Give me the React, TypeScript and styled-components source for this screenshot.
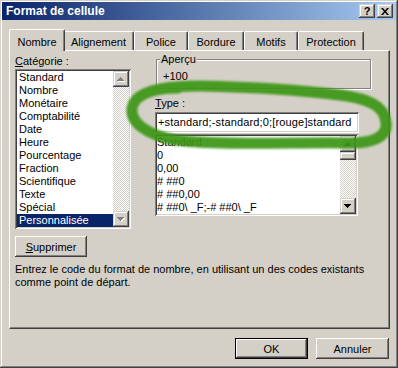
import React from 'react';
import styled, { createGlobalStyle } from 'styled-components';

const GlobalStyle = createGlobalStyle`
  html, body {
    margin: 0;
    padding: 0;
    background: #D4D0C8;
  }
  body {
    font-family: "Liberation Sans", Arial, sans-serif;
    font-size: 11px;
  }
`;

const raised = `
  box-shadow: inset -1px -1px #404040, inset 1px 1px #D4D0C8,
    inset -2px -2px #808080, inset 2px 2px #FFFFFF;
`;

const sunken = `
  box-shadow: inset 1px 1px #808080, inset -1px -1px #FFFFFF,
    inset 2px 2px #404040, inset -2px -2px #D4D0C8;
`;

const Window = styled.div`
  position: relative;
  width: 398px;
  height: 368px;
  box-sizing: border-box;
  padding: 2px;
  background: #D4D0C8;
  color: #000000;
  font: 11px "Liberation Sans", Arial, sans-serif;
  ${raised}
  display: flex;
  flex-direction: column;
`;

const TitleBar = styled.div`
  height: 18px;
  display: flex;
  align-items: center;
  justify-content: space-between;
  padding: 0 3px 0 4px;
  background: linear-gradient(to right, #0A246A, #A6CAF0);
`;

const Title = styled.span`
  color: #FFFFFF;
  font-weight: bold;
  font-size: 12px;
`;

const Caption = styled.div`
  display: flex;
  gap: 2px;
`;

const CaptionButton = styled.div`
  width: 16px;
  height: 14px;
  box-sizing: border-box;
  background: #D4D0C8;
  ${raised}
  display: flex;
  align-items: center;
  justify-content: center;
  font-weight: bold;
  font-size: 11px;
  line-height: 14px;
`;

const Body = styled.div`
  padding: 9px 6px 0 7px;
`;

const TabRow = styled.div`
  position: relative;
  z-index: 1;
  display: flex;
  align-items: flex-end;
  height: 22px;
  margin-bottom: -1px;
  padding-left: 2px;
`;

const Tab = styled.div<{ $w: number; $active?: boolean }>`
  position: relative;
  z-index: ${(p) => (p.$active ? 2 : 1)};
  box-sizing: border-box;
  width: ${(p) => (p.$active ? p.$w + 4 : p.$w)}px;
  height: ${(p) => (p.$active ? 22 : 19)}px;
  margin: 0 ${(p) => (p.$active ? -2 : 0)}px ${(p) => (p.$active ? 0 : 1)}px;
  padding-top: ${(p) => (p.$active ? 6 : 4)}px;
  line-height: 13px;
  text-align: center;
  background: #D4D0C8;
  border-top: 1px solid #FFFFFF;
  border-left: 1px solid #FFFFFF;
  border-right: 1px solid #404040;
  border-radius: 2px 2px 0 0;
  box-shadow: inset -1px 0 #808080;
`;

const Panel = styled.div`
  height: 279px;
  box-sizing: border-box;
  padding: 4px 0 0 5px;
  border-top: 1px solid #FFFFFF;
  border-left: 1px solid #FFFFFF;
  border-right: 1px solid #404040;
  border-bottom: 1px solid #404040;
  box-shadow: inset -1px -1px #808080;
`;

const Columns = styled.div`
  display: grid;
  grid-template-columns: 116px 216px;
  column-gap: 24px;
  align-items: start;
`;

const Column = styled.div`
  display: flex;
  flex-direction: column;
`;

const Label = styled.div<{ $top?: number }>`
  line-height: 13px;
  margin-top: ${(p) => p.$top ?? 0}px;
`;

const ListBox = styled.div<{ $w: number; $h: number; $top?: number }>`
  width: ${(p) => p.$w}px;
  height: ${(p) => p.$h}px;
  margin-top: ${(p) => p.$top ?? 0}px;
  box-sizing: border-box;
  padding: 2px;
  background: #FFFFFF;
  ${sunken}
  display: flex;
`;

const Items = styled.div`
  flex: 1;
  overflow: hidden;
`;

const Item = styled.div<{ $pad: number; $selected?: boolean }>`
  height: 13px;
  line-height: 13px;
  padding-left: ${(p) => p.$pad}px;
  white-space: nowrap;
  background: ${(p) => (p.$selected ? '#0A246A' : 'transparent')};
  color: ${(p) => (p.$selected ? '#FFFFFF' : '#000000')};
`;

const ScrollBar = styled.div`
  width: 16px;
  display: flex;
  flex-direction: column;
`;

const ArrowButton = styled.div`
  height: 16px;
  box-sizing: border-box;
  background: #D4D0C8;
  ${raised}
  display: flex;
  align-items: center;
  justify-content: center;
`;

const Track = styled.div`
  flex: 1;
  background-color: #FFFFFF;
  background-image: conic-gradient(#FFFFFF 25%, #D4D0C8 0 50%, #FFFFFF 0 75%, #D4D0C8 0);
  background-size: 2px 2px;
`;

const Thumb = styled.div`
  height: 8px;
  box-sizing: border-box;
  background: #D4D0C8;
  ${raised}
`;

const Button = styled.button<{ $w: number; $default?: boolean }>`
  width: ${(p) => p.$w}px;
  height: 21px;
  padding: 0;
  border: none;
  font: inherit;
  color: #000000;
  background: #D4D0C8;
  box-shadow: ${(p) =>
    p.$default
      ? 'inset 0 0 0 1px #000000, inset -2px -2px #404040, inset 2px 2px #FFFFFF, inset -3px -3px #808080'
      : 'inset -1px -1px #404040, inset 1px 1px #FFFFFF, inset -2px -2px #808080'};
`;

const GroupBox = styled.fieldset`
  margin: -2px 0 0 1px;
  width: 215px;
  min-width: 0;
  box-sizing: border-box;
  padding: 4px 0 5px 6px;
  border: 1px solid #808080;
  box-shadow: inset 1px 1px #FFFFFF, 1px 1px #FFFFFF;
`;

const Legend = styled.legend`
  padding: 0 1px;
  margin-left: -3px;
  line-height: 13px;
  background: #D4D0C8;
`;

const Preview = styled.div`
  line-height: 13px;
`;

const TextField = styled.div`
  width: 204px;
  height: 21px;
  margin-top: 2px;
  box-sizing: border-box;
  padding: 0 3px;
  background: #FFFFFF;
  ${sunken}
  line-height: 21px;
  white-space: nowrap;
  overflow: hidden;
  letter-spacing: 0.15px;
`;

const Description = styled.p`
  margin: 6px 0 0;
  line-height: 13px;
`;

const Footer = styled.div`
  display: flex;
  justify-content: flex-end;
  gap: 8px;
  margin-top: 9px;
  padding-right: 1px;
`;

const Scribble = styled.svg`
  position: absolute;
  left: 0;
  top: 0;
  pointer-events: none;
`;

const Arrow: React.FC<{ dir: 'up' | 'down'; disabled?: boolean }> = ({ dir, disabled }) => {
  const d =
    dir === 'up'
      ? 'M3 0h1v1h1v1h1v1h1v1H0V3h1V2h1V1h1z'
      : 'M0 0h7v1H6v1H5v1H4v1H3V3H2V2H1V1H0z';
  return (
    <svg width="8" height="5" viewBox="0 0 8 5" shapeRendering="crispEdges">
      {disabled && <path d={d} fill="#FFFFFF" transform="translate(1 1)" />}
      <path d={d} fill={disabled ? '#808080' : '#000000'} />
    </svg>
  );
};

const categories = [
  'Standard',
  'Nombre',
  'Monétaire',
  'Comptabilité',
  'Date',
  'Heure',
  'Pourcentage',
  'Fraction',
  'Scientifique',
  'Texte',
  'Spécial',
  'Personnalisée',
];

const formats = ['Standard', '0', '0,00', '# ##0', '# ##0,00', '# ##0\\ _F;-# ##0\\ _F'];

const tabs = [
  { label: 'Nombre', w: 52 },
  { label: 'Alignement', w: 71 },
  { label: 'Police', w: 54 },
  { label: 'Bordure', w: 56 },
  { label: 'Motifs', w: 54 },
  { label: 'Protection', w: 66 },
];

const App: React.FC = () => {
  return (
    <>
      <GlobalStyle />
      <Window>
        <TitleBar>
          <Title>Format de cellule</Title>
          <Caption>
            <CaptionButton>?</CaptionButton>
            <CaptionButton>
              <svg width="8" height="7" viewBox="0 0 8 7">
                <path d="M0 0h2l2 2.4L6 0h2L5 3.5 8 7H6L4 4.6 2 7H0l3-3.5z" fill="#000000" />
              </svg>
            </CaptionButton>
          </Caption>
        </TitleBar>

        <Body>
          <TabRow>
            {tabs.map((t, i) => (
              <Tab key={t.label} $w={t.w} $active={i === 0}>
                {t.label}
              </Tab>
            ))}
          </TabRow>

          <Panel>
            <Columns>
              <Column>
                <Label>
                  <u>C</u>atégorie :
                </Label>
                <ListBox $w={116} $h={160} $top={1}>
                  <Items>
                    {categories.map((c) => (
                      <Item key={c} $pad={2} $selected={c === 'Personnalisée'}>
                        {c}
                      </Item>
                    ))}
                  </Items>
                  <ScrollBar>
                    <ArrowButton>
                      <Arrow dir="up" disabled />
                    </ArrowButton>
                    <Track />
                    <ArrowButton>
                      <Arrow dir="down" disabled />
                    </ArrowButton>
                  </ScrollBar>
                </ListBox>
                <Button $w={72} style={{ marginTop: 7 }}>
                  <u>S</u>upprimer
                </Button>
              </Column>

              <Column>
                <GroupBox>
                  <Legend>Aperçu</Legend>
                  <Preview>+100</Preview>
                </GroupBox>
                <Label $top={8}>
                  <u>T</u>ype :
                </Label>
                <TextField>+standard;-standard;0;[rouge]standard</TextField>
                <ListBox $w={203} $h={82} $top={1}>
                  <Items>
                    {formats.map((f) => (
                      <Item key={f} $pad={0}>
                        {f}
                      </Item>
                    ))}
                  </Items>
                  <ScrollBar>
                    <ArrowButton>
                      <Arrow dir="up" />
                    </ArrowButton>
                    <Thumb />
                    <Track />
                    <ArrowButton>
                      <Arrow dir="down" />
                    </ArrowButton>
                  </ScrollBar>
                </ListBox>
              </Column>
            </Columns>

            <Description>
              Entrez le code du format de nombre, en utilisant un des codes existants
              <br />
              comme point de départ.
            </Description>
          </Panel>

          <Footer>
            <Button $w={73} $default>
              OK
            </Button>
            <Button $w={73}>Annuler</Button>
          </Footer>
        </Body>

        {/* hand-drawn highlight around the Type field */}
        <Scribble width="398" height="368" viewBox="0 0 398 368">
          <defs>
            <filter id="soft" x="-5%" y="-20%" width="110%" height="140%">
              <feGaussianBlur stdDeviation="0.8" />
            </filter>
          </defs>
          <path
            d="M178 88 C150 88 134 96 132 108 C130 122 146 135 176 140 C222 146 300 142 345 143 C375 144 388 136 386 122 C384 106 370 99 340 95 C300 90 250 87 200 86 C176 86 152 88 141 96"
            fill="none"
            stroke="#3E9612"
            strokeWidth="11"
            strokeLinecap="round"
            strokeLinejoin="round"
            opacity="0.93"
            filter="url(#soft)"
          />
        </Scribble>
      </Window>
    </>
  );
};

export default App;
